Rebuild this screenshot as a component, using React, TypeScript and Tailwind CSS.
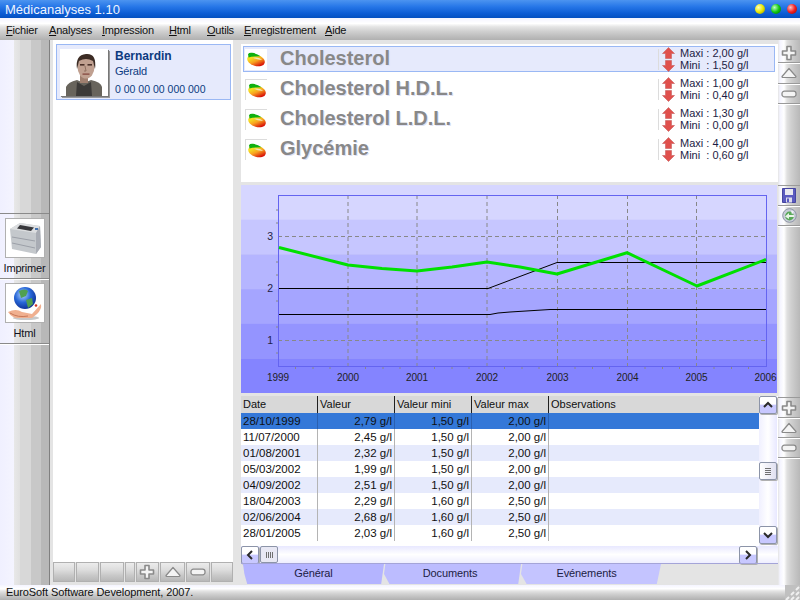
import React from "react";

const H_STRIPES = "bg-[linear-gradient(180deg,#f4f4ff_0px,#ffffff_25%,#e4e4e4_40%,#d0d0d0_60%,#c0c0c0_80%,#b0b0b0_100%)]";

function Plus() {
  return (
    <svg width="16" height="16" viewBox="0 0 16 16">
      <path d="M6 1.5h4v4.5h4.5v4H10v4.5H6V10H1.5V6H6z" fill="#f4f4f4" stroke="#8a8a8a" strokeWidth="1.6" strokeLinejoin="round" />
    </svg>
  );
}
function Tri() {
  return (
    <svg width="16" height="12" viewBox="0 0 16 12">
      <path d="M8 1.5L15 9.5Q15 10.5 14 10.5H2Q1 10.5 1 9.5z" fill="#f4f4f4" stroke="#8a8a8a" strokeWidth="1.2" strokeLinejoin="round" />
    </svg>
  );
}
function Minus() {
  return (
    <svg width="16" height="8" viewBox="0 0 16 8">
      <rect x="1" y="1.2" width="14" height="5.6" rx="2.4" fill="#f4f4f4" stroke="#8a8a8a" strokeWidth="1.3" />
    </svg>
  );
}
function Save() {
  return (
    <svg width="14" height="15" viewBox="0 0 14 15">
      <path d="M0.5 0.5h13v14h-13z" fill="#5a5ac0" stroke="#4646a0" />
      <rect x="3" y="1" width="8" height="6" fill="#e8e8f0" />
      <rect x="4" y="9.5" width="6" height="5" fill="#dcdcec" />
      <rect x="5" y="10.5" width="2" height="3.5" fill="#5a5ac0" />
    </svg>
  );
}
function Refresh() {
  return (
    <svg width="15" height="15" viewBox="0 0 15 15">
      <circle cx="7.5" cy="7.5" r="6.8" fill="#c8ccd8" stroke="#8c94a4" />
      <circle cx="7.5" cy="8" r="4.4" fill="#58a858" />
      <path d="M3 8.5L7 5v2h5v2H7v2z" fill="#e8f4e8" />
      <path d="M9 2.5l3 1-2 3z" fill="#f0f0f8" />
    </svg>
  );
}

function SideGroup({ children }: { children: React.ReactNode }) {
  return <div className="flex flex-col">{children}</div>;
}
function SideBtn({ children, h }: { children: React.ReactNode; h: string }) {
  return <div className={`${h} flex items-center justify-center border-b border-[#9a9a9a] shadow-[0_1px_0_#ffffff]`}>{children}</div>;
}

function AnalyteIcon() {
  return (
    <svg width="20" height="16" viewBox="0 0 20 16">
      <defs>
        <linearGradient id="ai" x1="0.1" y1="0.55" x2="0.7" y2="1">
          <stop offset="0" stopColor="#f4e020" />
          <stop offset="0.45" stopColor="#f8a020" />
          <stop offset="1" stopColor="#d81008" />
        </linearGradient>
      </defs>
      <ellipse cx="10" cy="9.4" rx="9" ry="5.6" transform="rotate(16 10 9.4)" fill="url(#ai)" />
      <path d="M2 3.2Q3 1.4 6 1.8Q11 2.4 14.5 5.2L9 5.4Q5 5.4 2.6 6.4z" fill="#10b010" />
      <path d="M7 6.8Q12 5.8 16 8.6Q12 9.4 7 6.8z" fill="#f0e8b8" />
    </svg>
  );
}

function Arrow({ up }: { up?: boolean }) {
  return (
    <svg width="13" height="12" viewBox="0 0 13 12" className="block">
      <path
        d={up ? "M6.5 0.5L12.5 6.5H9.5V11.5H3.5V6.5H0.5z" : "M6.5 11.5L12.5 5.5H9.5V0.5H3.5V5.5H0.5z"}
        fill="#e0504c"
        stroke="#c86060"
        strokeWidth="0.6"
      />
    </svg>
  );
}

const analytes = [
  { n: "Cholesterol", max: "2,00", min: "1,50", sel: true },
  { n: "Cholesterol H.D.L.", max: "1,00", min: "0,40" },
  { n: "Cholesterol L.D.L.", max: "1,30", min: "0,00" },
  { n: "Glycémie", max: "4,00", min: "0,60" },
];

function AnalyteRow({ a }: { a: (typeof analytes)[number] }) {
  return (
    <div className={`h-[26px] mb-[4px] flex items-center border ${a.sel ? "border-[#9ab8f4] bg-[#e6eafc]" : "border-transparent"}`}>
      <div className={`w-[22px] h-[21px] ml-[1px] flex items-center justify-center ${a.sel ? "bg-white" : "border-l border-t border-[#dcdcdc]"}`}>
        <AnalyteIcon />
      </div>
      <div className="ml-[13px] -mt-[2px] flex-1 text-[20px] leading-none font-bold text-[#888888] [text-shadow:1px_1px_0_#dfe2f4]">{a.n}</div>
      <div className="w-[116px] h-[21px] flex border-l border-[#dcdcdc]">
        <div className="w-[18px] flex flex-col items-center justify-between -my-[2px]">
          <Arrow up />
          <Arrow />
        </div>
        <div className="ml-[3px] text-[11px] leading-[12px] text-[#1c1c44] -mt-[2px]">
          <div className="whitespace-pre">Maxi : {a.max} g/l</div>
          <div className="whitespace-pre">Mini  : {a.min} g/l</div>
        </div>
      </div>
    </div>
  );
}

const rows = [
  ["28/10/1999", "2,79", "1,50", "2,00"],
  ["11/07/2000", "2,45", "1,50", "2,00"],
  ["01/08/2001", "2,32", "1,50", "2,00"],
  ["05/03/2002", "1,99", "1,50", "2,00"],
  ["04/09/2002", "2,51", "1,50", "2,00"],
  ["18/04/2003", "2,29", "1,60", "2,50"],
  ["02/06/2004", "2,68", "1,60", "2,50"],
  ["28/01/2005", "2,03", "1,60", "2,50"],
];

function Chart() {
  const xs = [278, 348, 417, 487, 557.5, 627.5, 696.5, 766.5];
  const bands = ["#d6d6ff", "#c6c6ff", "#b5b5ff", "#a5a5ff", "#9494ff", "#8484ff"];
  const ys = [236, 288, 340];
  return (
    <svg width="536" height="208" viewBox="241 185 536 208" className="block" fontFamily="Liberation Sans, sans-serif">
      {bands.map((c, i) => (
        <rect key={c} x="241" y={185 + i * 34.7} width="536" height="35" fill={c} />
      ))}
      {ys.map((y) => (
        <line key={y} x1="278" x2="767" y1={y + 0.5} y2={y + 0.5} stroke="#888" strokeDasharray="4 3" />
      ))}
      {xs.slice(1, 7).map((x) => (
        <line key={x} x1={x} x2={x} y1="195" y2="366" stroke="#888" strokeDasharray="4 3" />
      ))}
      <rect x="278.5" y="195.5" width="488" height="171" fill="none" stroke="#6464f0" />
      {[210, 223, 262, 275, 301, 327, 353].map((y) => (
        <line key={y} x1="276" x2="278" y1={y} y2={y} stroke="#888" />
      ))}
      {xs.slice(0, 7).flatMap((x) =>
        [17.5, 35, 52].map((d) => <line key={x + d} x1={x + d} x2={x + d} y1="367" y2="369" stroke="#888" />)
      )}
      <polyline points="279,288.5 488,288.5 557,262.5 766,262.5" fill="none" stroke="#000" />
      <polyline points="279,314.5 490,314.5 498,313 510,312 550,309.5 766,309.5" fill="none" stroke="#000" />
      <polyline
        points="279,247.5 348,265 382,268.5 417,271 452,267 487,262 520,267 557,274 627,252.7 697,286 766,259.5"
        fill="none"
        stroke="#00e000"
        strokeWidth="3"
        strokeLinejoin="round"
      />
      {["3", "2", "1"].map((t, i) => (
        <text key={t} x="273" y={ys[i] + 3.5} textAnchor="end" fontSize="10.5" fill="#222244">{t}</text>
      ))}
      {xs.map((x, i) => (
        <text key={x} x={Math.min(x, 765.5)} y="380.5" textAnchor="middle" fontSize="10" fill="#222">{1999 + i}</text>
      ))}
    </svg>
  );
}

function ScrollBtn({ d }: { d: string }) {
  return (
    <div className="w-[18px] h-[18px] rounded-[2px] border border-[#8c94a8] bg-[linear-gradient(180deg,#ffffff_0%,#ffffff_45%,#c8c8ff_50%,#c8c8ff_100%)] flex items-center justify-center shadow-[1px_1px_0_#b0b0b0]">
      <svg width="10" height="10" viewBox="0 0 10 10"><path d={d} fill="none" stroke="#2a2a2a" strokeWidth="2" /></svg>
    </div>
  );
}

function Photo() {
  return (
    <svg width="48" height="47" viewBox="0 0 48 47">
      <rect width="48" height="47" fill="#ffffff" />
      <path d="M6 47V38q2-5 11-7l7 3 7-3q10 2 11 7v9z" fill="#68645c" />
      <path d="M17 33l7 4 7-4 1 14H16z" fill="#3c3a38" />
      <rect x="20" y="26" width="8" height="8" fill="#a08070" />
      <ellipse cx="26" cy="18" rx="8.5" ry="11.5" fill="#c0a090" />
      <path d="M17 20q-2-14 9-15t9 15q-1-4-2-8q-7-4-14 0q-1 4-2 8z" fill="#3c2c24" />
      <rect x="20" y="15" width="4.5" height="1.6" fill="#4a3028" />
      <rect x="27.5" y="15" width="4.5" height="1.6" fill="#4a3028" />
      <path d="M25 17l1 5h-2" fill="none" stroke="#907060" />
      <rect x="22.5" y="24.5" width="7" height="1.2" fill="#804038" />
    </svg>
  );
}
function Printer() {
  return (
    <svg width="38" height="38" viewBox="0 0 38 38">
      <rect width="38" height="38" fill="#ffffff" />
      <path d="M4 10L14 4L34 7L35 28L30 35L6 30z" fill="#c4c8cc" />
      <path d="M4 10L30 14L34 7L14 4z" fill="#dcdee0" />
      <path d="M14 6L28 8.5L25 12L11 9.5z" fill="#38383c" />
      <path d="M30 14L34 7L35 28L30 35z" fill="#a8acb4" />
      <path d="M6 18L29 22M6 24L29 29" stroke="#9ca0a8" />
      <rect x="29" y="9" width="3" height="2" fill="#4070b0" />
    </svg>
  );
}
function Globe() {
  return (
    <svg width="38" height="38" viewBox="0 0 38 38">
      <defs>
        <radialGradient id="gl" cx="0.4" cy="0.35" r="0.7">
          <stop offset="0" stopColor="#b8d8ff" />
          <stop offset="0.5" stopColor="#2868d8" />
          <stop offset="1" stopColor="#0c2c90" />
        </radialGradient>
      </defs>
      <rect width="38" height="38" fill="#ffffff" />
      <ellipse cx="20" cy="34" rx="13" ry="2" fill="#c8c8c8" />
      <path d="M2 28q8-4 14 0l10 2 9-10q1 5-4 10l-5 4H12q-6 0-10-6z" fill="#f0b090" />
      <path d="M4 29q8 5 18 3" stroke="#c87858" fill="none" />
      <circle cx="30" cy="21.5" r="1.3" fill="#d03020" />
      <circle cx="19" cy="14" r="11" fill="url(#gl)" />
      <path d="M13 7q6-3 9 0l-2 5-5 2zM20 16l6-2 1 6-5 4z" fill="#50a050" />
    </svg>
  );
}

function LeftBtn({ label, children }: { label: string; children: React.ReactNode }) {
  return (
    <div className="h-[65px] flex flex-col items-center border-b border-[#8a8a8a] shadow-[0_1px_0_#ffffff]">
      <div className="mt-[4px] border border-[#b0b0b0]">{children}</div>
      <div className="mt-[3px] text-[11px] tracking-[-0.2px] leading-[14px] text-[#101020]">{label}</div>
    </div>
  );
}

export default function App() {
  const menu: [string, string, string][] = [
    ["F", "ichier", "w-[43px]"],
    ["A", "nalyses", "w-[53px]"],
    ["I", "mpression", "w-[67px]"],
    ["H", "tml", "w-[38px]"],
    ["O", "utils", "w-[37px]"],
    ["E", "nregistrement", "w-[81px]"],
    ["A", "ide", "w-[30px]"],
  ];
  return (
    <div className="w-[800px] h-[600px] overflow-hidden flex flex-col bg-[#e4e4e4] font-['Liberation_Sans',sans-serif] text-[11px]">
      {/* title bar */}
      <div className="h-[18px] flex items-center bg-[linear-gradient(180deg,#4c94f0_0%,#2878e8_35%,#0c5cd4_75%,#0450c0_100%)]">
        <div className="ml-[5px] text-[13px] leading-none text-[#eef4ff]">Médicanalyses 1.10</div>
        <div className="ml-auto mr-[3px] flex gap-[6px]">
          <div className="w-[10px] h-[10px] rounded-full bg-[radial-gradient(circle_at_35%_35%,#ffffc0,#e8e800_50%,#808000)]" />
          <div className="w-[10px] h-[10px] rounded-full bg-[radial-gradient(circle_at_35%_35%,#c0ffc0,#10c810_50%,#006000)]" />
          <div className="w-[10px] h-[10px] rounded-full bg-[radial-gradient(circle_at_35%_35%,#ffc0c0,#f02020_50%,#900000)]" />
        </div>
      </div>
      {/* menu bar */}
      <div className={`h-[22px] pl-[6px] flex items-end pb-[3px] ${H_STRIPES}`}>
        {menu.map(([u, r, w], i) => (
          <div key={i} className={`${w} text-[11px] tracking-[-0.2px] leading-[13px] text-[#101010] whitespace-nowrap`}>
            <span className="underline">{u}</span>
            {r}
          </div>
        ))}
      </div>
      {/* main */}
      <div className="h-[545px] flex">
        {/* left strip */}
        <div className="w-[50px] pt-[173px] border-r border-[#808080] bg-[linear-gradient(90deg,#f0f0ff_0px,#f4f4ff_14px,#e8e8e8_14px,#e0e0e0_20px,#d8d8d8_20px,#d8d8d8_31px,#c8c8c8_31px,#c8c8c8_41px,#b8b8b8_41px,#b8b8b8_50px)]">
          <div className="border-t border-[#8a8a8a]">
            <LeftBtn label="Imprimer"><Printer /></LeftBtn>
            <LeftBtn label="Html"><Globe /></LeftBtn>
          </div>
        </div>
        {/* patient panel */}
        <div className="w-[190px] flex flex-col pl-[3px] pr-[7px]">
          <div className="h-[522px] bg-white pt-[4px] pl-[3px] pr-[2px] flex flex-col">
            <div className="h-[56px] flex items-center border border-[#9ab8f4] bg-[#e6eafc] pl-[3px]">
              <div className="w-[48px] h-[47px] shadow-[1px_1px_0_#777,2px_2px_0_#9a9a9a]"><Photo /></div>
              <div className="ml-[7px] flex flex-col text-[#0c3a80]">
                <div className="text-[12px] leading-[16px] font-bold">Bernardin</div>
                <div className="text-[11px] tracking-[-0.2px] leading-[14px]">Gérald</div>
                <div className="mt-[4px] text-[10.5px] leading-[14px]">0 00 00 00 000 000</div>
              </div>
            </div>
            <div className="flex-1" />
          </div>
          <div className="h-[20px] flex gap-[1px]">
            {["w-[22px]", "w-[23px]", "w-[24px]", "w-[10px]", "w-[24px]", "w-[25px]", "w-[24px]", "w-[22px]"].map((w, i) => (
              <div key={i} className={`${w} flex items-center justify-center border border-[#b0b0b0] bg-[linear-gradient(180deg,#ececec_0%,#dcdcdc_40%,#c8c8c8_70%,#b8b8b8_100%)]`}>
                {i === 4 && <Plus />}
                {i === 5 && <Tri />}
                {i === 6 && <Minus />}
              </div>
            ))}
          </div>
        </div>
        {/* center */}
        <div className="w-[538px] flex flex-col pl-[1px]">
          <div className="h-[138px] mt-[4px] bg-white pt-[2px] pl-[2px] pr-[3px]">
            {analytes.map((a) => <AnalyteRow key={a.n} a={a} />)}
          </div>
          <div className="h-[3px]" />
          <Chart />
          <div className="h-[3px]" />
          {/* table */}
          <div className="flex h-[150px] bg-white">
            <div className="w-[518px] flex flex-col">
              <div className="h-[17px] flex bg-[#d8d8d8] text-[11px] leading-[17px] text-[#101010]">
                <div className="w-[77px] pl-[2px] border-r border-[#202020]">Date</div>
                <div className="w-[77px] pl-[2px] border-r border-[#202020]">Valeur</div>
                <div className="w-[77px] pl-[2px] border-r border-[#202020]">Valeur mini</div>
                <div className="w-[77px] pl-[2px] border-r border-[#202020]">Valeur max</div>
                <div className="flex-1 pl-[2px]">Observations</div>
              </div>
              {rows.map((r, i) => (
                <div
                  key={r[0]}
                  className={`h-[16px] flex text-[11.5px] leading-[16px] text-[#101010] ${i === 0 ? "bg-[#3478d8]" : i % 2 === 0 ? "bg-[#e6eafc]" : "bg-white"}`}
                >
                  <div className={`w-[77px] pl-[2px] border-r ${i === 0 ? "border-[#2a60b0]" : "border-[#b4b4b4]"}`}>{r[0]}</div>
                  {r.slice(1).map((v, j) => (
                    <div key={j} className={`w-[77px] pr-[2px] text-right border-r ${i === 0 ? "border-[#2a60b0]" : "border-[#b4b4b4]"}`}>{v} g/l</div>
                  ))}
                </div>
              ))}
            </div>
            <div className="w-[18px] bg-[linear-gradient(90deg,#f0f0ff,#ffffff,#e8e8ff)] flex flex-col items-center justify-between">
              <ScrollBtn d="M1 7L5 3L9 7" />
              <div className="w-[18px] h-[18px] mt-[2px] rounded-[2px] border border-[#8c94a8] bg-[linear-gradient(90deg,#ffffff,#e0e0f0)] flex flex-col items-center justify-center gap-[1px] shadow-[1px_1px_0_#b0b0b0]">
                <div className="w-[6px] h-[1px] bg-[#707070]" />
                <div className="w-[6px] h-[1px] bg-[#707070]" />
                <div className="w-[6px] h-[1px] bg-[#707070]" />
                <div className="w-[6px] h-[1px] bg-[#707070]" />
              </div>
              <div className="mb-[2px]"><ScrollBtn d="M1 3L5 7L9 3" /></div>
            </div>
          </div>
          {/* hscroll */}
          <div className="h-[17px] flex items-center bg-[linear-gradient(180deg,#e8e8ff,#ffffff_50%,#eeeeff)]">
            <ScrollBtn d="M7 1L3 5L7 9" />
            <div className="w-[18px] h-[17px] ml-[1px] rounded-[2px] border border-[#8c94a8] bg-[#e8e8f4] flex items-center justify-center gap-[1px]">
              <div className="w-[1px] h-[6px] bg-[#707070]" />
              <div className="w-[1px] h-[6px] bg-[#707070]" />
              <div className="w-[1px] h-[6px] bg-[#707070]" />
              <div className="w-[1px] h-[6px] bg-[#707070]" />
            </div>
            <div className="ml-[461px]"><ScrollBtn d="M3 1L7 5L3 9" /></div>
          </div>
          {/* tabs */}
          <div className="h-[22px] flex items-start pl-[2px] border-t border-[#a4a4d8] text-[11px] tracking-[-0.1px] leading-[19px] text-[#1c1c44]">
            <div className="w-[141px] h-[20px] text-center bg-[#b4b4ff] [clip-path:polygon(0_0,100%_0,98%_100%,3%_100%,1%_50%)]">Général</div>
            <div className="w-[137px] h-[20px] pr-[5px] text-center bg-[#bcbcff] [clip-path:polygon(1%_0,100%_0,98%_100%,4%_100%,0_50%)]">Documents</div>
            <div className="w-[140px] h-[20px] pr-[9px] text-center bg-[#c4c4ff] [clip-path:polygon(1%_0,100%_0,97%_100%,4%_100%,0_50%)]">Evénements</div>
          </div>
        </div>
        {/* right side bar */}
        <div className="w-[22px] flex flex-col bg-[linear-gradient(90deg,#e4e4e4_0px,#f4f4ff_2px,#ffffff_6px,#e0e0e0_9px,#d0d0d0_13px,#b8b8b8_22px)]">
          <div className="h-[3px]" />
          <SideGroup>
            <SideBtn h="h-[20px]"><Plus /></SideBtn>
            <SideBtn h="h-[21px]"><Tri /></SideBtn>
            <SideBtn h="h-[20px]"><Minus /></SideBtn>
          </SideGroup>
          <div className="h-[82px] border-b border-[#9a9a9a]" />
          <SideGroup>
            <SideBtn h="h-[20px]"><Save /></SideBtn>
            <SideBtn h="h-[20px]"><Refresh /></SideBtn>
          </SideGroup>
          <div className="h-[172px] border-b border-[#9a9a9a]" />
          <SideGroup>
            <SideBtn h="h-[20px]"><Plus /></SideBtn>
            <SideBtn h="h-[20px]"><Tri /></SideBtn>
            <SideBtn h="h-[20px]"><Minus /></SideBtn>
          </SideGroup>
        </div>
      </div>
      {/* status bar */}
      <div className={`h-[15px] flex items-center justify-between ${H_STRIPES}`}>
        <div className="ml-[6px] text-[11px] tracking-[-0.1px] leading-none text-[#101010]">EuroSoft Software Development, 2007.</div>
        <svg width="15" height="15" viewBox="0 0 15 15">
          <rect width="15" height="15" fill="#c0c0c0" />
          <path d="M14 2l-3 3M9 7l-3 3M14 7l-3 3M4 12l-3 3M9 12l-3 3M14 12l-3 3" stroke="#f0f0f0" strokeWidth="2" />
        </svg>
      </div>
    </div>
  );
}
